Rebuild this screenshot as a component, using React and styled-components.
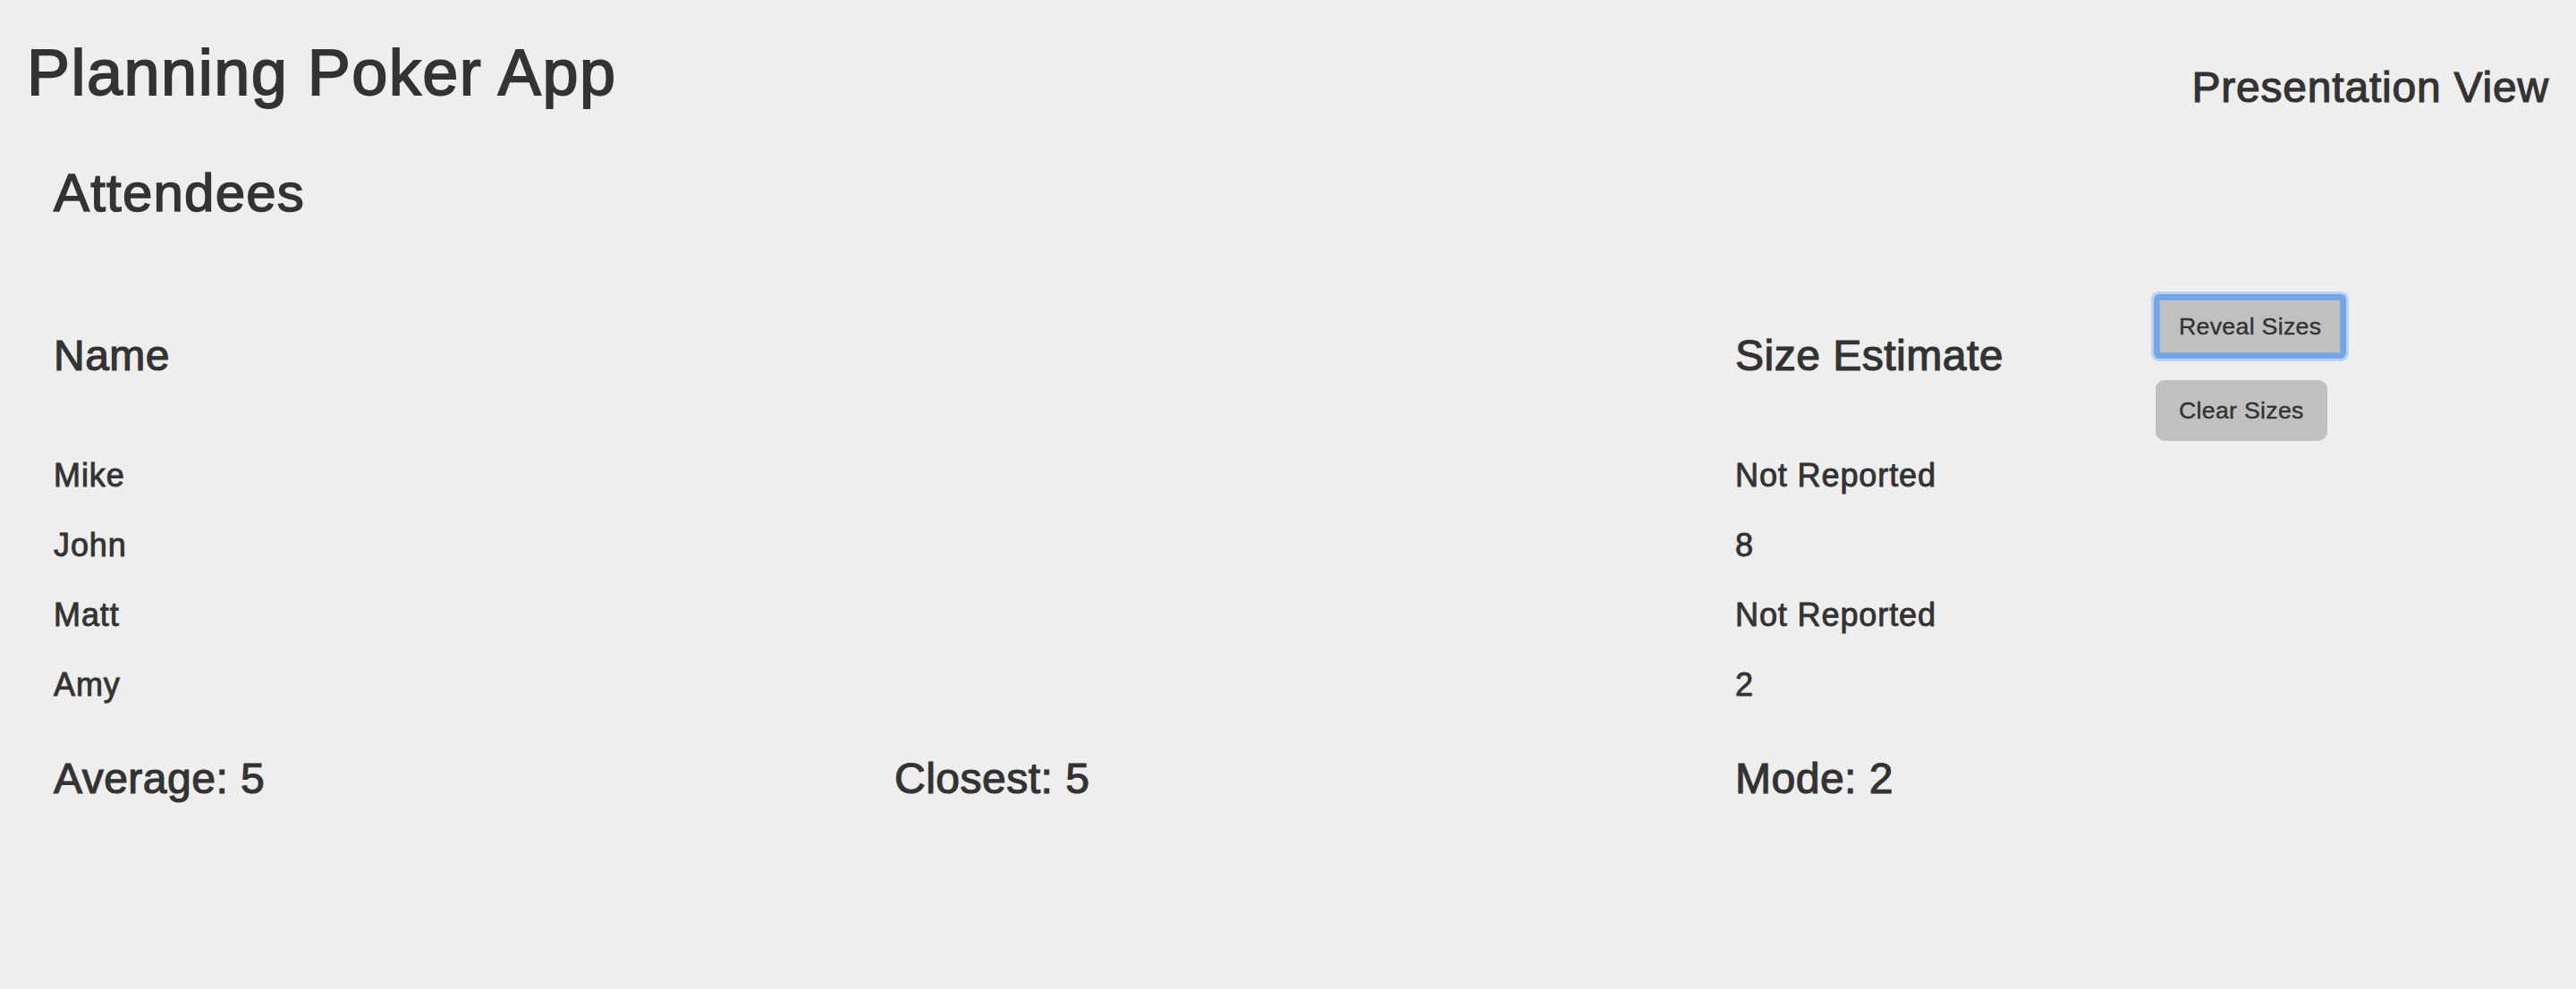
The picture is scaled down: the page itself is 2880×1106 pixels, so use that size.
import React from "react";
import styled, { createGlobalStyle } from "styled-components";

const GlobalStyle = createGlobalStyle`
  html, body {
    margin: 0;
    padding: 0;
    background-color: #eeeeee;
  }
  body {
    font-family: "Liberation Sans", Arial, Helvetica, sans-serif;
    color: #333;
  }
`;

const Page = styled.div`
  min-height: 1106px;
  background-color: #eeeeee;
`;

const TopBar = styled.header`
  display: flex;
  justify-content: space-between;
  align-items: flex-start;
  padding: 42px 30px 0;
`;

const Title = styled.h1`
  margin: 0;
  font-size: 72px;
  line-height: 79px;
  font-weight: 400;
  letter-spacing: 1.5px;
  -webkit-text-stroke: 1.8px #333;
`;

const NavLink = styled.a`
  margin-top: 29px;
  font-size: 48px;
  line-height: 53px;
  color: #333;
  letter-spacing: 0.8px;
  text-decoration: none;
  cursor: pointer;
  -webkit-text-stroke: 1.2px #333;
`;

const Section = styled.section`
  padding: 0 60px;
`;

const SectionTitle = styled.h2`
  margin: 59px 0 0;
  font-size: 60px;
  line-height: 66px;
  font-weight: 400;
  letter-spacing: 1.2px;
  -webkit-text-stroke: 1.5px #333;
`;

const Grid = styled.div`
  display: grid;
  grid-template-columns: repeat(3, 1fr);
  column-gap: 60px;
`;

const HeadRow = styled(Grid)`
  margin-top: 82px;
  align-items: start;
`;

const Heading = styled.h3`
  margin: 40px 0 0;
  font-size: 48px;
  line-height: 53px;
  font-weight: 400;
  letter-spacing: 0.5px;
  white-space: nowrap;
  -webkit-text-stroke: 1.2px #333;
`;

const NameCell = styled.div`
  grid-column: ${({ span }) => `span ${span || 1}`};
`;

const SizeHead = styled.div`
  display: grid;
  grid-template-columns: 470px auto;
  align-items: start;
`;

const ButtonStack = styled.div`
  display: flex;
  flex-direction: column;
  align-items: flex-start;
  gap: 26px;
`;

const Button = styled.button`
  height: 68px;
  padding: 0 26px;
  font-family: "Liberation Sans", Arial, Helvetica, sans-serif;
  font-size: 26.7px;
  letter-spacing: 0.3px;
  color: #333;
  background-color: #c0c0c0;
  border: none;
  border-radius: ${({ focused }) => (focused ? "4px" : "10px")};
  cursor: pointer;
  -webkit-text-stroke: 0.4px #333;
  box-shadow: ${({ focused }) =>
    focused
      ? "inset 0 0 0 4px #6ea7eb, inset 0 0 0 5px #93a9c2, 0 0 0 2px #6ea7eb, 0 0 0 5px rgba(110, 167, 235, 0.4)"
      : "none"};
  outline: none;
`;

const Row = styled(Grid)`
  font-size: 36px;
  line-height: 78px;
  letter-spacing: 0.9px;
  -webkit-text-stroke: 0.9px #333;
`;

const Stats = styled(Grid)`
  margin-top: 39px;
`;

const Stat = styled.h3`
  margin: 0;
  font-size: 48px;
  line-height: 53px;
  font-weight: 400;
  letter-spacing: 0.5px;
  -webkit-text-stroke: 1.2px #333;
`;

const attendees = [
  { name: "Mike", size: "Not Reported" },
  { name: "John", size: "8" },
  { name: "Matt", size: "Not Reported" },
  { name: "Amy", size: "2" },
];

const App = () => {
  return (
    <Page>
      <GlobalStyle />
      <TopBar>
        <Title>Planning Poker App</Title>
        <NavLink>Presentation View</NavLink>
      </TopBar>
      <Section>
        <SectionTitle>Attendees</SectionTitle>
        <HeadRow>
          <NameCell span={2}>
            <Heading>Name</Heading>
          </NameCell>
          <SizeHead>
            <Heading>Size Estimate</Heading>
            <ButtonStack>
              <Button focused>Reveal Sizes</Button>
              <Button>Clear Sizes</Button>
            </ButtonStack>
          </SizeHead>
        </HeadRow>
        {attendees.map(a => (
          <Row key={a.name}>
            <NameCell span={2}>{a.name}</NameCell>
            <div>{a.size}</div>
          </Row>
        ))}
        <Stats>
          <Stat>Average: 5</Stat>
          <Stat>Closest: 5</Stat>
          <Stat>Mode: 2</Stat>
        </Stats>
      </Section>
    </Page>
  );
};

export default App;
